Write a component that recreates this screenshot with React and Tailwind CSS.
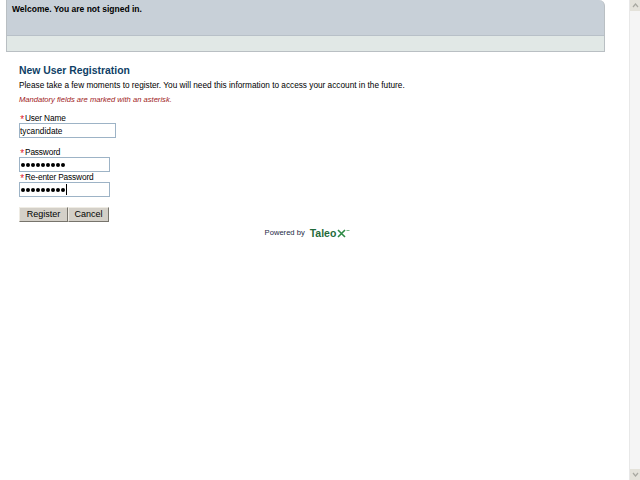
import React from 'react';

const Req = () => (
  <span className="inline-block w-[6px] translate-y-[2px] text-center text-[10px] leading-[10px] text-[#e0202c]">*</span>
);

const Field = ({ label, children }) => (
  <div>
    <div className="h-[10px] text-[8.3px] leading-[10px] tracking-[-0.15px]"><Req />{label}</div>
    {children}
  </div>
);

const inputCls = 'block h-[15px] border border-[#9db3c6] bg-white pl-0 text-[8.3px] leading-[13px] text-black outline-none';

const Dots = ({ caret }) => (
  <div className="flex h-full items-center gap-[1px] pl-[1px]">
    {Array.from({ length: 9 }).map((_, i) => (
      <span key={i} className="h-[4px] w-[4px] rounded-full bg-black" />
    ))}
    {caret && <span className="h-[11px] w-px bg-black" />}
  </div>
);

const App = () => {
  return (
    <div className="flex h-[480px] w-[640px] overflow-hidden bg-white font-['Liberation_Sans',Arial,sans-serif] text-[8.25px] text-black">
      <div className="w-[629px]">
        <div className="ml-[6px] w-[599px] h-[52px] overflow-hidden rounded-tr-[6px] border-x border-b border-[#b9bfc3] bg-[#c8d0d8]">
          <div className="h-[36px] border-b border-[#b8c0c8] pl-[5px] pt-[3px] text-[8.5px] font-bold leading-[12px]">
            Welcome. You are not signed in.
          </div>
          <div className="h-[15px] bg-[#e1e8e6]" />
        </div>

        <div className="pl-[19px] pt-[12px]">
          <h1 className="text-[10.4px] font-bold leading-[13px] text-[#0f3f66]">New User Registration</h1>
          <p className="mt-[3px] leading-[12px]">
            Please take a few moments to register. You will need this information to access your account in the future.
          </p>
          <p className="mt-[2px] text-[7.6px] italic leading-[11px] text-[#a01a1a]">
            Mandatory fields are marked with an asterisk.
          </p>

          <div className="mt-[8px]">
            <Field label="User Name">
              <input className={`${inputCls} w-[97px]`} defaultValue="tycandidate" />
            </Field>
          </div>
          <div className="mt-[9px]">
            <Field label="Password">
              <div className={`${inputCls} w-[91px]`}><Dots /></div>
            </Field>
          </div>
          <div>
            <Field label="Re-enter Password">
              <div className={`${inputCls} w-[91px]`}><Dots caret /></div>
            </Field>
          </div>

          <div className="mt-[10px] flex">
            <button className="h-[15px] w-[49px] border border-[#efece4] border-r-[#77746c] border-b-[#77746c] bg-[#d4d0c8] pb-[2px] text-[9px] leading-[12px]">Register</button>
            <button className="h-[15px] w-[41px] border border-[#efece4] border-r-[#77746c] border-b-[#77746c] bg-[#d4d0c8] pb-[2px] text-[9px] leading-[12px]">Cancel</button>
          </div>
        </div>

        <div className="mt-[5px] flex w-[600px] items-center justify-center pl-[15px]">
          <span className="text-[7.6px] leading-[12px] text-[#1c2a44]">Powered by</span>
          <span className="ml-[5px] text-[10.5px] font-bold leading-[12px] text-[#1f6b3a]">Taleo</span>
          <svg className="ml-[1px]" width="13" height="9" viewBox="0 0 13 9" fill="none">
            <path d="M1 1l7 7M8 1L1 8" stroke="#2d8a45" strokeWidth="1.6" />
            <path d="M9.5 1.5h3" stroke="#7ab98a" strokeWidth="1" />
          </svg>
        </div>
      </div>

      <div className="flex w-[11px] flex-col border-l border-[#e8e8e8] bg-[#f5f5f5]">
        <div className="flex h-[11px] items-center justify-center bg-[#e4e2da]">
          <svg width="7" height="5" viewBox="0 0 7 5" fill="none"><path d="M1 4l2.5-3L6 4" stroke="#a8a8a0" strokeWidth="1.2" /></svg>
        </div>
        <div className="flex-1" />
        <div className="flex h-[11px] items-center justify-center bg-[#e4e2da]">
          <svg width="7" height="5" viewBox="0 0 7 5" fill="none"><path d="M1 1l2.5 3L6 1" stroke="#a8a8a0" strokeWidth="1.2" /></svg>
        </div>
      </div>
    </div>
  );
};

export default App;
